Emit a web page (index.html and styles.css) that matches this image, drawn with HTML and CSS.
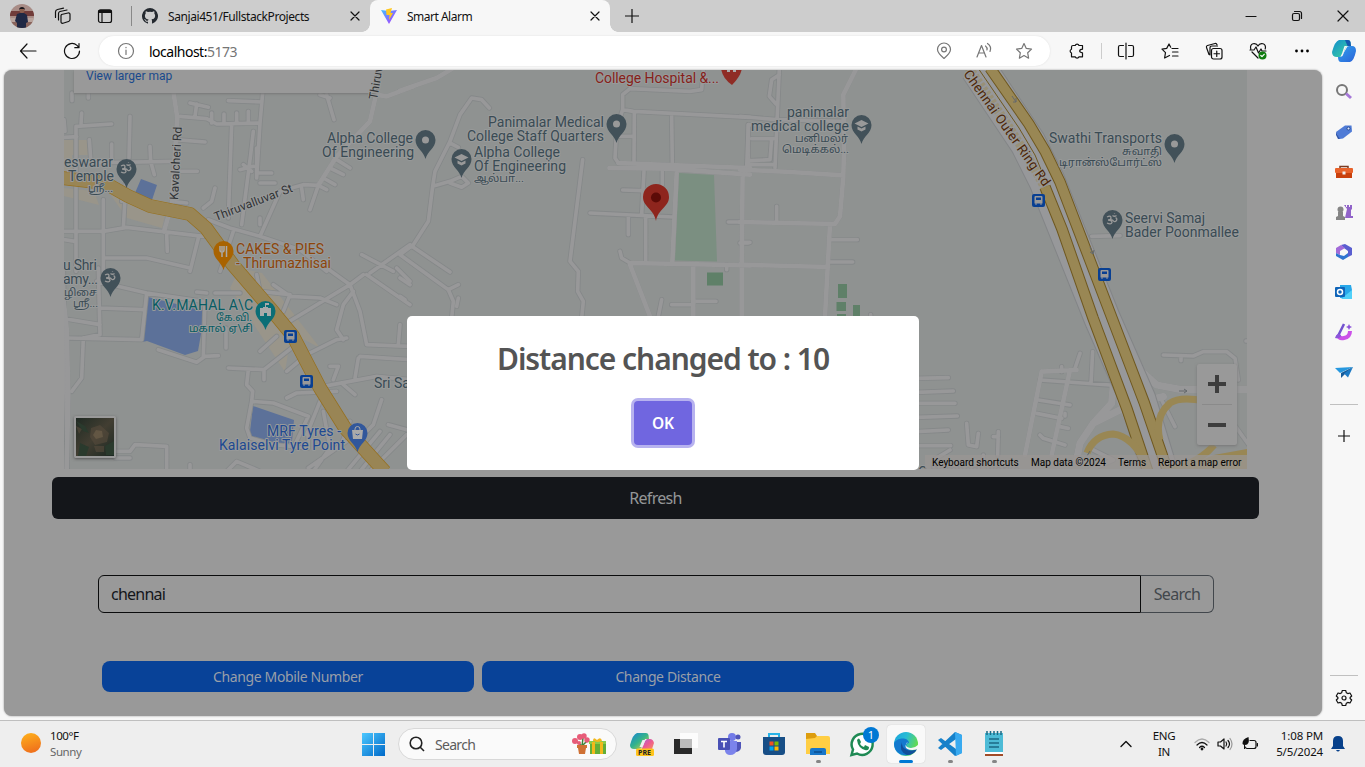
FILE: index.html
```html
<!DOCTYPE html>
<html lang="en">
<head>
<meta charset="utf-8">
<title>Smart Alarm</title>
<link rel="stylesheet" href="styles.css">
</head>
<body>
<header class="tabbar">
  <div class="slot avatar-slot"><svg width="24" height="24" viewBox="0 0 24 24"><defs><clipPath id="av"><circle cx="12" cy="12" r="12"/></clipPath></defs><g clip-path="url(#av)"><path fill="#a88c86" d="M0 0h24v24H0z"/><path fill="#713c3a" d="M0 7h24v5H0z"/><path fill="#b9a49d" d="M0 14h24v4H0z"/><path fill="#89645c" d="M0 18h24v6H0z"/><path fill="#202945" d="M7 10l3-1h4l3 2 1 7-2 1v5H7v-5l-2-2z"/><circle cx="12" cy="6.500" r="2.500" fill="#8b604f"/><path fill="#17151b" d="M9 6c0-4 6-4 6 0l-1-1h-4z"/></g></svg></div>
  <div class="slot s41"><svg class="line" width="18" height="18" viewBox="0 0 18 18"><path d="M7.500 7.500l6.500-1.500q2-.300 2 1.500v5q0 1.500-1.500 2l-5.500 1.700q-2 .500-2-1.500V8.500z"/><path d="M4.500 13V6.500Q4.500 5 6 4.500l7-1.500M1.500 10.500V5Q1.500 3 3.500 2.500l6-1.300"/></svg></div>
  <div class="slot s43"><svg class="line" width="16" height="16" viewBox="0 0 16 16"><rect x="1.500" y="1.800" width="13" height="12.700" rx="2"/><path d="M2 2.500h12v2H2z" fill="#111"/><path d="M5 5v9"/></svg></div>
  <i class="tab-sep"></i>
  <div class="tab">
    <svg width="16" height="16" viewBox="0 0 16 16"><path fill="#24292f" d="M8 0a8 8 0 0 0-2.530 15.590c.4.070.55-.170.55-.380v-1.490c-2.230.480-2.700-.950-2.700-.950-.360-.920-.890-1.170-.890-1.170-.730-.500.060-.490.060-.490.800.060 1.230.820 1.230.820.710 1.220 1.870.870 2.330.660.070-.520.280-.870.510-1.070-1.780-.200-3.640-.890-3.640-3.950 0-.870.310-1.590.820-2.150-.080-.200-.360-1.020.080-2.120 0 0 .670-.210 2.200.820a7.600 7.600 0 0 1 4 0c1.530-1.040 2.200-.820 2.200-.820.440 1.100.160 1.920.080 2.120.510.560.820 1.270.820 2.150 0 3.070-1.870 3.750-3.650 3.950.290.250.540.730.540 1.480v2.200c0 .210.150.460.550.380A8 8 0 0 0 8 0z"/></svg>
    <span class="tab-title t1">Sanjai451/FullstackProjects</span>
    <svg class="line x" width="10" height="10" viewBox="0 0 10 10"><path d="M1 1l8 8M9 1L1 9"/></svg>
  </div>
  <div class="tab active">
    <svg width="16" height="16" viewBox="0 0 16 16"><defs><linearGradient id="v1" x2="1" y2="1"><stop stop-color="#41c0ff"/><stop offset="1" stop-color="#b52fff"/></linearGradient></defs><path fill="url(#v1)" d="M0 2l8 1 8-1-8 14z"/><path fill="#ffc820" d="M5 1.500L11 0l-1.500 5H12L8 12l.500-5H5.500z"/></svg>
    <span class="tab-title t2">Smart Alarm</span>
    <svg class="line x" width="10" height="10" viewBox="0 0 10 10"><path d="M1 1l8 8M9 1L1 9"/></svg>
  </div>
  <div class="slot s43"><svg class="line" width="14" height="14" viewBox="0 0 14 14"><path d="M7 0v14M0 7h14"/></svg></div>
  <div class="window-buttons">
    <svg class="line" width="46" height="32" viewBox="0 0 46 32"><path d="M18 16.500h10"/></svg>
    <svg class="line" width="46" height="32" viewBox="0 0 46 32"><rect x="18.500" y="13.500" width="7" height="7" rx="1.500"/><path d="M20.500 11.500h5q2 0 2 2v5"/></svg>
    <svg class="line" width="46" height="32" viewBox="0 0 46 32"><path d="M18 11l10 10M28 11L18 21"/></svg>
  </div>
</header>
<nav class="toolbar">
  <div class="slot nav-back"><svg class="line" width="18" height="16" viewBox="0 0 18 16"><path d="M17 8H1.500M8 1L1.500 8 8 15"/></svg></div>
  <div class="slot nav-reload"><svg class="line" width="18" height="18" viewBox="0 0 18 18"><path d="M16.500 9a7.500 7.500 0 1 1-2.500-5.600L16 5.500M16 1.500v4.200h-4.200"/></svg></div>
  <div class="address">
    <svg class="line grey" width="18" height="18" viewBox="0 0 18 18"><circle cx="9" cy="9" r="7.500"/><path d="M9 8v4.500M9 5.300v.400"/></svg>
    <span class="url">localhost:<em>5173</em></span>
    <div class="slot s40"><svg class="line grey" width="18" height="18" viewBox="0 0 18 18"><path d="M9 16.500C5 13 2.500 10.500 2.500 7.500a6.500 6.500 0 0 1 13 0C15.500 10.500 13 13 9 16.500z"/><circle cx="9" cy="7.500" r="2.400"/></svg></div>
    <div class="slot s40"><svg class="line grey" width="18" height="18" viewBox="0 0 18 18"><path d="M2 15L6.500 3.500 11 15M3.500 11h6M10.500 4q2 1.500 1.500 4M12.500 1.500q4.500 3 2.500 8"/></svg></div>
    <div class="slot s40"><svg class="line grey" width="18" height="18" viewBox="0 0 18 18"><path d="M9 1.500l2.300 4.900 5.200.700-3.800 3.700.900 5.400L9 13.600l-4.600 2.600.900-5.400L1.500 7.100l5.200-.700z"/></svg></div>
  </div>
  <div class="slot s44"><svg class="line" width="18" height="18" viewBox="0 0 18 18"><path d="M5 3.500h2.200a2 2 0 0 1 3.800 0h3.500v3.700q-2.800.300-2.800 1.800t2.800 1.800v4H11a2 2 0 0 1-3.800 0H3.500V11a2 2 0 0 1 0-3.800V5q0-1.500 1.500-1.500z"/></svg></div>
  <i class="tool-sep"></i>
  <div class="slot s44"><svg class="line" width="18" height="18" viewBox="0 0 18 18"><path d="M9 1v16M6.500 3.500H3q-1.500 0-1.500 1.500v8q0 1.500 1.500 1.500h3.500M11.500 3.500H15q1.500 0 1.500 1.500v8q0 1.500-1.500 1.500h-3.500"/></svg></div>
  <div class="slot s44"><svg class="line" width="18" height="18" viewBox="0 0 18 18"><path d="M11 6.500h6M11.500 10H17M11.500 14H17M9.700 5.200L8 2 5.700 6.400 1 7.100l3.500 3.500-.900 5.400L8.500 13.500"/></svg></div>
  <div class="slot s44"><svg class="line" width="18" height="18" viewBox="0 0 18 18"><path d="M4 12.500l-2.500-7Q1 4 2.500 3.500L10 1.500q1.500-.300 2 1.200M5 13V6q0-2 2-2h5.500"/><rect x="6.500" y="6.500" width="10.500" height="10.500" rx="2" fill="#f7f7f7"/><path d="M11.750 9v5.500M9 11.750h5.500"/></svg></div>
  <div class="slot s44"><svg class="line" width="18" height="18" viewBox="0 0 18 18"><path d="M1.800 7C0 1 7 0 9 4c2-4 9-3 7.200 3M3 10l6 6M1 8h4l2-3 2.500 6L12 7l1 2h4"/><circle cx="13.500" cy="13.500" r="4" fill="#107c10" stroke="none"/><path d="M11.800 13.500l1.200 1.200 2.200-2.400" stroke="#fff"/></svg></div>
  <div class="slot s44"><svg width="16" height="4" viewBox="0 0 16 4"><circle cx="2.500" cy="2" r="1.400"/><circle cx="8" cy="2" r="1.400"/><circle cx="13.500" cy="2" r="1.400"/></svg></div>
  <div class="slot s40"><svg width="24" height="24" viewBox="0 0 24 24"><use href="#copilot"/></svg></div>
</nav>

<div class="middle">
  <main class="page">
    <section class="map">
      <svg class="map-art" viewBox="64 70 1183 399" width="1183" height="399">
        <defs>
          <g id="roads">
            <g transform="translate(60 68) scale(.33333)">
              <path d="M210 145L207 270M65 135L63 168M48 175L155 168M48 175V610M12 208L50 206M88 215L92 270M155 228V272M55 285L340 280M270 235L272 280 283 320M345 215L435 222M345 310L412 310M360 145L440 152 470 168 600 165M390 105L445 118M410 108L405 145M455 135V165M492 138V168M530 135V165M565 130V165M505 98L605 102M608 75L600 165 590 330M515 170L505 450M580 190L572 260 545 470M590 240V330M590 315H635M600 345H645M540 305L580 295M550 290L575 310M445 455L510 480 600 505M600 505L660 370 730 350 775 352M0 490H130L200 478 430 505M185 400L200 330M195 390L190 480M130 395V610M320 500L322 550M520 490L480 610M415 510L390 610M465 360L455 400 430 420M775 352L800 365M790 330L825 350M810 300L850 320M830 275L870 300M725 360L730 395M775 352L750 425M800 80L822 155M780 80L810 90M36 75V98M85 75V90M130 570L260 570 390 600M600 505L720 545 800 610M1050 530L930 615M905 560L1000 610M600 450V470M12 515L45 520M335 400L380 405M12 155L15 190"/>
              <path class="mid" d="M340 70L352 150 345 250 335 410 312 490M775 352L830 265 930 160 948 80 980 85 1060 55"/>
            </g>
            <g transform="translate(60 268) scale(.33333)">
              <path d="M115 0L120 200 70 210 65 330 35 370M0 150L120 170M120 120L250 125M110 40L260 75 430 100M260 75L245 215 20 210M10 0L22 600M435 100L430 265M295 245L410 283 435 265 475 263M465 75H540M410 72L440 75M498 180V240M505 300L612 305 720 220M612 305V335M565 305L560 350 578 370 575 400 560 480 570 510 640 530 745 540V490M575 400L640 405 745 445 700 540M600 250L650 205M680 165L870 50 910 20M870 50L800 0M640 50L690 85 780 90 830 110M590 20L600 70 690 80 670 130M870 50L900 130 920 230 1050 235M830 185L850 110 880 70M830 185L850 215M740 260L830 215 860 210M900 265L1050 275M895 270L885 330M790 355L950 325 1050 335M680 310L740 260M680 390L710 375 830 370M820 335L835 295 810 295M740 500L780 400M965 395L940 470 910 500M920 20L1050 110M165 550H210L225 530 320 535V610M165 570H210M745 600L860 520M860 610L960 490M900 610L990 500M930 610L1040 500M985 470L1040 485M790 430L810 540 760 610M870 460L840 540M1020 170L1015 230M1010 0L1050 40M850 350L885 380M390 590V610M500 610L530 580 600 610"/>
              <path class="mid" d="M0 0L20 180 25 380 20 610"/>
            </g>
            <g transform="translate(400 68) scale(.33333)">
              <path class="mid" d="M0 68L110 30 160 0"/>
              <path d="M268 120L245 95 215 90 180 140 150 220 105 310 98 355 85 460 40 530 0 560M98 355L150 340 185 325 205 345 185 358 150 345M150 225L175 238M40 538L150 612M0 560L145 665 160 700 155 750M145 665L175 650M0 630L30 650M0 685L15 695M175 690L170 715M548 275L510 580 535 610 533 670 550 700 545 750M910 0L905 65 870 70 690 62 668 80V125L700 130 1050 148M668 125L650 180 645 270 655 285M703 135L702 285M815 145L817 290M660 205H700M732 310L725 440M787 310V350M668 366L725 368M570 435L820 447M685 447V500M737 447V580M660 550L665 570 690 585M815 710H880M880 700H948M785 695L775 745M985 462H1025M980 590V605M1025 523H1050M1045 170V290"/>
              <path class="mid" d="M655 285L1050 300M628 300L800 302 1050 320M830 315L817 580M690 585L1050 592M690 590L750 745M880 595V750M1028 310L1025 590V750"/>
            </g>
            <g transform="translate(740 68) scale(.33333)">
              <path d="M118 0L105 300M118 20L95 35 88 85 108 108M0 145L110 155 310 160M25 170L20 300M35 212H100M30 278L90 275 95 212M20 290H100M110 415V460M270 515H352M270 582H338M0 525H25M392 740V750M25 170H100"/>
              <path class="mid" d="M350 0L310 80 312 250 310 320M0 305L150 312 310 322M310 325L300 445 285 468 0 462M270 470L255 745M0 590L265 597"/>
              <path d="M1055 505L1140 503"/>
            </g>
            <g transform="translate(880 300) scale(.33333)">
              <path d="M110 235L205 233M110 277L220 273M110 310H225M110 352L232 348M110 395L205 390M110 437L212 437M480 240L690 255M475 300L570 315M470 340L545 355M600 160L585 205M638 155L633 250M545 200V215M480 405L490 415 555 435M540 380L565 385M555 340V348M260 370L265 435 290 440 295 400M355 395L353 465M340 410H355M310 465V480M850 165L940 168 970 155 1040 155 1065 175 1075 240M903 170V182M845 300L885 380M1060 370L1110 440M1110 123h-12M160 500V480L210 450"/>
              <path class="mid" d="M485 215L435 465M485 215L590 210M570 210L515 465"/>
              <path class="wide" d="M700 255L695 310 640 370 600 430 590 480M640 370L760 310 850 290M780 210L830 255 900 268 1110 268M735 200L720 300 760 400 810 510"/>
              <path d="M630 510L700 480 640 450"/>
            </g>
          </g>
          <g id="pin"><path d="M0 16C-2 8-10 5-10-3a10 10 0 0 1 20 0C10 5 2 8 0 16z"/></g>
          <g id="dot"><use href="#pin"/><circle cy="-3" r="3.500" fill="#999"/></g>
          <g id="cap"><use href="#pin"/><path fill="#999" d="M0-8l7 3.500L0-1l-7-3.500zM-4-1.500L0 .500l4-2V1.500L0 3.500l-4-2z"/></g>
          <g id="om"><use href="#pin"/><path fill="none" stroke="#999" stroke-width="1.300" d="M-5.500-6q4-2 4 1 0 2-3 2 4 0 4 2.500-1 2.500-5 .500M-2-3q2-.500 3 1t3-.500q1-2.500-1-2.500M0-7.500q2 1.500 4 0M2-9.500v.500"/></g>
          <g id="bus"><rect x="-6.500" y="-6.500" width="13" height="13" rx="2" fill="#083f92"/><path fill="#999" d="M-4-3.500Q-4-4.500-3-4.500H3Q4-4.500 4-3.500V3H3v1.500H2V3H-2V4.500H-3V3H-4zM-2.500-3V-.500H2.500V-3z"/></g>
          <linearGradient id="sat" x2="1" y2="1"><stop stop-color="#1f2a23"/><stop offset=".5" stop-color="#423e32"/><stop offset="1" stop-color="#1c2822"/></linearGradient>
        </defs>
        <path fill="#8f9291" d="M64 70h1183v399H64z"/>
        <g class="sand"><path d="M64 140H88V155H72V178H64zM64 196L99 205 94 191 64 188zM107 190L168 202 162 228 127 218zM240 268L262 273 320 348 305 340 291 335 285 372 230 288z"/></g>
        <g fill="#5c7199"><path d="M141 179L157 185 152 200 135 193zM148 297L205 311 198 351 185 355 147 341 142 342zM253 406L294 420 292 441 283 448 249 440z"/></g>
        <path fill="#7b8f81" d="M679 173L714 175 717 261.500 675 260.500z"/>
        <path fill="#5f8068" d="M707 272.500h16v13h-16zM838 284h9v14h-9zM836.500 302h9.500v9h-9.500zM853 305h7v12h-7zM837 314h9v4h-9z"/>
        <use href="#roads" class="casing"/>
        <use href="#roads" class="surface"/>
        <path class="hw-case" d="M978 68L1028 143 1047 181 1102 318 1138 400 1160 472"/>
        <path class="hw" d="M978 68L1028 143 1047 181 1102 318 1138 400 1160 472"/>
        <g class="gold-case"><path d="M1045 187L1062 229 1093 318 1127 409 1148 472M990 68L1029 124 1045 151 1060 182 1107 305 1144 402 1168 472"/></g>
        <g class="gold"><path d="M1045 187L1062 229 1093 318 1127 409 1148 472M990 68L1029 124 1045 151 1060 182 1107 305 1144 402 1168 472"/></g>
        <path class="gold-edge" d="M978 68L1019 128 1035 155 1047 184"/>
        <path class="gold-left" d="M969 68L1009 127 1032 164 1045 188"/>
        <g class="ramp"><path d="M1087 453Q1094 435 1113 434 1133 436 1146 465M1160 440Q1154 417 1170 403 1180 396 1205 401M1214 445Q1200 462 1172 469"/><path fill="#998754" stroke="none" d="M1214 455L1247 449V469H1180z"/></g>
        <path class="main-case" d="M62 178L105 183 128 196 150 206 190 214 206 228 233 265 270 308 293 336 320 388 345 428 385 472"/>
        <path class="main-road" d="M62 178L105 183 128 196 150 206 190 214 206 228 233 265 270 308 293 336 320 388 345 428 385 472"/>
        <g stroke="#64696c" fill="none"><path d="M1012 96l4 6m-3 0h3v-4M1090 247l3 7m-3-2l3 2 1-4M1179 391h8m-3-2l3 2-3 2M1087 456l3-5"/></g>

        <use href="#bus" x="1038.500" y="200.500"/><use href="#bus" x="1104.500" y="274.500"/><use href="#bus" x="290.500" y="336.500"/><use href="#bus" x="306.500" y="381.500"/>
        <g fill="#425159"><use href="#dot" x="425.500" y="143"/><use href="#dot" x="616.500" y="127"/><use href="#dot" x="1174.500" y="147"/><use href="#cap" x="461.500" y="162"/><use href="#cap" x="861.500" y="128"/><use href="#om" x="126.500" y="172"/><use href="#om" x="110.500" y="281"/><use href="#om" x="1112.500" y="223"/></g>
        <use href="#pin" x="223.500" y="254" fill="#a96300"/><path stroke="#aaa" stroke-width="1.500" fill="none" d="M220 246v4q0 2 2 2v5M224 246v4q0 2-2 2M222 246v5M226.500 257v-11"/>
        <use href="#pin" x="265.500" y="314" fill="#0b6e76"/><path fill="#aaa" d="M260 316v-8h3v-1h2v-4h4v2h-3v2h2v1h3v8h-4v-3h-3v3z"/>
        <use href="#pin" x="357.500" y="436" fill="#31579b"/><path fill="#aaa" d="M352 430h11l-1 9h-9z"/><path stroke="#aaa" fill="none" d="M355 430v-1a2.500 2.500 0 0 1 5 0v1"/><path stroke="#31579b" fill="none" d="M355.500 434q2 2 4 0"/>
        <path fill="#8f2c25" d="M721 68h21q-1 8-10 17Q722 78 721 68z"/><path fill="#aaa" d="M727 68h3v4h-3zM733 68h3v4h-3z"/>
        <path fill="#8e251d" d="M656 221C654 209 643 207 643 197a13 13 0 0 1 26 0C669 207 658 209 656 221z"/><circle cx="656" cy="197.500" r="5" fill="#5c0b07"/>

        <g class="label">
          <text x="327" y="143" textLength="86">Alpha College</text><text x="322" y="157" textLength="92">Of Engineering</text>
          <text x="488" y="127" textLength="116">Panimalar Medical</text><text x="467" y="141" textLength="137">College Staff Quarters</text>
          <text x="474" y="157" textLength="86">Alpha College</text><text x="474" y="171" textLength="92">Of Engineering</text><text class="ta" x="474" y="182" textLength="50" lengthAdjust="spacingAndGlyphs">ஆல்பா...</text>
          <text x="787" y="117" textLength="62">panimalar</text><text x="751" y="131" textLength="98">medical college</text><text class="ta" x="795" y="142" textLength="53" lengthAdjust="spacingAndGlyphs">பனிமலர்</text><text class="ta" x="782" y="153" textLength="67" lengthAdjust="spacingAndGlyphs">மெடிக்கல்...</text>
          <text x="1049" y="143" textLength="113">Swathi Transports</text><text class="ta" x="1122" y="155" textLength="40" lengthAdjust="spacingAndGlyphs">சுவாதி</text><text class="ta" x="1059" y="166" textLength="103" lengthAdjust="spacingAndGlyphs">டிரான்ஸ்போர்ட்ஸ்</text>
          <text x="1125" y="223" textLength="80">Seervi Samaj</text><text x="1125" y="237" textLength="114">Bader Poonmallee</text>
          <text x="64" y="167" textLength="49">eswarar</text><text x="68" y="181" textLength="46">Temple</text><text class="ta" x="88" y="192" textLength="25" lengthAdjust="spacingAndGlyphs">ஸ்ரீ...</text>
          <text x="63" y="270" textLength="34">u Shri</text><text x="63" y="284" textLength="35">amy...</text><text class="ta" x="64" y="296" textLength="33" lengthAdjust="spacingAndGlyphs">ழிசை</text><text class="ta" x="73" y="307" textLength="25" lengthAdjust="spacingAndGlyphs">ஸ்ரீ...</text>
          <text x="374" y="388">Sri Sair</text><text x="918" y="477">C</text>
        </g>
        <g class="label orange"><text x="236" y="254" textLength="88">CAKES &amp; PIES</text><text x="236" y="268" textLength="95">- Thirumazhisai</text></g>
        <g class="label teal"><text x="152" y="310" textLength="101">K.V.MAHAL A\C</text><text class="ta" x="216" y="321" textLength="36" lengthAdjust="spacingAndGlyphs">கே.வி.</text><text class="ta" x="189" y="332" textLength="64" lengthAdjust="spacingAndGlyphs">மகால் ஏ\சி</text></g>
        <g class="label blue"><text x="267" y="436" textLength="74">MRF Tyres -</text><text x="219" y="450" textLength="126">Kalaiselvi Tyre Point</text></g>
        <g class="label red"><text x="595" y="83" textLength="124">College Hospital &amp;...</text></g>
        <g class="label street"><text transform="translate(178 200) rotate(-87)" textLength="73">Kavalcheri Rd</text><text transform="translate(216 221) rotate(-21)" textLength="83">Thiruvalluvar St</text></g>
        <g class="label street brown"><text transform="translate(963 74) rotate(54.500)" textLength="139">Chennai Outer Ring Rd</text></g>
        <text x="930" y="474" class="ghost" textLength="90">Dambedi works</text>
      </svg>
      <div class="view-larger">View larger map</div>
      <svg class="street-top" width="30" height="34" viewBox="368 70 30 34"><g class="label street"><text transform="translate(377 100) rotate(-80)">Thiruvalluvar St</text></g></svg>
      <div class="satellite"><svg width="38" height="38" viewBox="0 0 38 38"><path fill="url(#sat)" d="M0 0h38v38H0z"/><g fill="#574b3c" opacity=".6"><path d="M15 10l9-3 9 8-2 9-12 3-5-8zM18 28h10v6H20zM0 8l6 3-3 5z"/><path fill="#7a6850" d="M20 12l6 1 1 6-7 2-3-4z"/></g><g fill="#2a3a2d"><path d="M0 3l9 5 4 7-6-2zM4 25l9 4-3 9H2zM29 28l9-5v14h-8z"/></g></svg></div>
      <div class="zoom-control"><svg width="40" height="81" viewBox="0 0 40 81"><path fill="#3d3d3d" d="M11 18h7v-7h4v7h7v4h-7v7h-4v-7h-7zM11 59h18v4H11z"/><path fill="#8a8a8a" d="M5 40h30v1H5z"/></svg></div>
      <div class="map-credit"><span class="c1">Keyboard shortcuts</span><span class="c2">Map data ©2024</span><span class="c3">Terms</span><span class="c4">Report a map error</span></div>
    </section>
    <button class="refresh">Refresh</button>
    <div class="search-row"><div class="search-input">chennai</div><div class="search-button">Search</div></div>
    <div class="actions"><button>Change Mobile Number</button><button>Change Distance</button></div>
    <div class="overlay"><div class="modal"><h2>Distance changed to : 10</h2><button>OK</button></div></div>
  </main>
  <aside class="sidebar">
    <div class="side-slot"><svg width="18" height="18" viewBox="0 0 18 18" fill="none"><circle cx="7" cy="7" r="5" stroke="#777" stroke-width="2"/><path d="M11 10.500l5 4.500" stroke="#a678d8" stroke-width="3"/></svg></div>
    <div class="side-slot"><svg width="18" height="16" viewBox="0 0 18 16"><path fill="#4f7bd6" d="M1 8L10 1.500h6.500l.500 6-9 7-3.500.500z"/><path fill="#2f57ad" d="M1 8l4 7h-2L1 11z"/><circle cx="13.500" cy="4.500" r="1.500" fill="#dce6ff" stroke="#274b94"/></svg></div>
    <div class="side-slot"><svg width="18" height="16" viewBox="0 0 18 16"><path d="M5 5V2.500h8V5" fill="none" stroke="#7b3a20" stroke-width="1.500"/><rect y="4" width="18" height="5" rx="1" fill="#e8622a"/><path fill="#c9400c" d="M1 9h16v5H1z"/><path fill="#eee" d="M7.500 7.500h3v3h-3z"/></svg></div>
    <div class="side-slot"><svg width="18" height="18" viewBox="0 0 18 18"><path fill="#9163c9" d="M9 2h2v2h1V2h2v2h1V2h2v4l-1 1v6h2v2h-8l2-9z"/><g fill="#858585"><circle cx="5.500" cy="6.500" r="3"/><path d="M3 9h5v4l2 1v3H1v-3l2-1z"/></g></svg></div>
    <div class="side-slot"><svg width="18" height="18" viewBox="0 0 18 18"><path fill="#5a5ed0" d="M6 2l4-1 7 4v7l-4 2V8L9 5z"/><path fill="#a26bd8" d="M6 2l4 3-5 3v4L1 10V5z"/><path fill="#2e74d0" d="M1 10l4 2 4 1 4-3v4l-5 3-7-4z"/></svg></div>
    <div class="side-slot"><svg width="18" height="16" viewBox="0 0 18 16"><path fill="#28a8ea" d="M5 1h11l1 5v8H5z"/><path fill="#50d0f8" d="M17 6v9H6z"/><rect y="3" width="10" height="10" rx="1" fill="#0f64b8"/><circle cx="5" cy="8" r="2.500" fill="none" stroke="#fff" stroke-width="1.500"/></svg></div>
    <div class="side-slot"><svg width="20" height="18" viewBox="0 0 20 18"><path d="M4 12q1 4 6 3 6-1 6-7" fill="none" stroke="#cb50e8" stroke-width="4"/><path d="M4 13L10 1" stroke="#7353cf" stroke-width="2.500"/><path fill="#8d55db" d="M14 3l1-2 1 2 2 1-2 1-1 2-1-2-2-1zM1 15q2-6 6-3 0 4-6 3z"/></svg></div>
    <div class="side-slot"><svg width="18" height="16" viewBox="0 0 18 16"><path fill="#2698df" d="M0 4l18-1L5 9z"/><path fill="#165b99" d="M18 3L6 9v5l4-4z"/><path fill="#1b79c4" d="M18 3L9 9.500l4 4z"/></svg></div>
    <i class="side-line"></i>
    <div class="side-slot"><svg class="line" width="12" height="12" viewBox="0 0 12 12"><path d="M6 0v12M0 6h12"/></svg></div>
    <i class="side-line last"></i>
    <div class="side-slot"><svg class="line" width="18" height="18" viewBox="0 0 18 18"><circle cx="9" cy="9" r="2"/><path d="M7.300 1.500h3.400l.6 2.200 1.500.9 2.200-.6 1.700 3-1.600 1.500v1l1.600 1.500-1.700 3-2.200-.6-1.500.9-.6 2.200H7.300l-.6-2.200-1.500-.9-2.200.6-1.700-3 1.600-1.500v-1L1.300 7 3 4l2.200.6 1.500-.9z"/></svg></div>
  </aside>
</div>

<footer class="taskbar">
  <svg class="sun" width="20" height="20" viewBox="0 0 20 20"><defs><linearGradient id="sung" x2=".3" y2="1"><stop stop-color="#ffb31c"/><stop offset="1" stop-color="#f0731c"/></linearGradient></defs><circle cx="10" cy="10" r="10" fill="url(#sung)"/></svg>
  <div class="weather"><span>100°F</span><span class="muted">Sunny</span></div>
  <svg class="win" width="23" height="23" viewBox="0 0 23 23"><defs><linearGradient id="wing" x2="1" y2="1"><stop stop-color="#4cc8ff"/><stop offset="1" stop-color="#0069c8"/></linearGradient></defs><path fill="url(#wing)" d="M0 0h11v11H0zM12 0h11v11H12zM0 12h11v11H0zM12 12h11v11H12z"/></svg>
  <div class="task-search"><svg width="16" height="16" viewBox="0 0 16 16" fill="none" stroke="#222" stroke-width="1.600"><circle cx="7" cy="7" r="5.800"/><path d="M11 11l4 4"/></svg><span>Search</span>
    <svg width="34" height="22" viewBox="0 0 34 22"><path stroke="#39823a" stroke-width="1.500" fill="none" d="M5 9l5 4 1-8M10 13l5-5"/><g fill="#e75c78"><circle cx="3" cy="8" r="3"/><circle cx="8" cy="4" r="3"/><circle cx="12" cy="3" r="2.700"/><circle cx="15" cy="7" r="2.700"/><circle cx="7" cy="10" r="2"/></g><path fill="#cf7135" d="M5 12h10v3h-1l-1 6H7l-1-6H5z"/><path fill="#62ae38" d="M18 9h16v12H18z"/><path fill="#8acb4b" d="M17 8h17v3H17z"/><path fill="#f2b81c" d="M20 9h3v12h-3zM28 9h3v12h-3zM21 8q0-5 4-1 4-4 5 1l-4 1z"/></svg></div>
  <div class="app"><svg width="24" height="24" viewBox="0 0 24 24"><defs><linearGradient id="cg1" y2="1"><stop stop-color="#108ccf"/><stop offset="1" stop-color="#42d79b"/></linearGradient><linearGradient id="cg2" x2="1" y2="1"><stop stop-color="#31a2ee"/><stop offset="1" stop-color="#2b62d8"/></linearGradient><linearGradient id="cg3" x2="1" y2="1"><stop stop-color="#9862ef"/><stop offset=".5" stop-color="#ec5a91"/><stop offset="1" stop-color="#ff9c52"/></linearGradient><linearGradient id="cg4" y2="1"><stop stop-color="#1782d8"/><stop offset=".5" stop-color="#35b48a"/><stop offset="1" stop-color="#f5d03c"/></linearGradient><g id="copilot"><path fill="url(#cg1)" d="M7 1h9q2 0 2.500 2L19 7h-3q-2 0-3 3l-2 5q-1 3-4 3H5q-5 0-5-5Q3 2 7 1z"/><path fill="url(#cg2)" d="M17 7h3q4 0 4 5-2 10-6 11H9q-3 0-3-5h2q2 0 3-3l3-5q1-3 3-3z"/><path fill="#f7f7f7" d="M12.500 7h3q-2 1-3 4l-1.500 5q-.500 1.500-2.500 1.500l1.500-3z"/><path fill="#1557b0" d="M13 1h3q2 0 2.500 2L19 7h-3.500z"/></g></defs><path fill="url(#cg4)" d="M7 1h9q2 0 2.500 2L19 7h-4l-3 8q-1 2-4 2H4q-4 0-4-4Q3 2 7 1z"/><path fill="url(#cg3)" d="M17 7h3q3 0 4 4l-3 9H9q3-2 4-6l2-5z"/><path fill="#eee" d="M12.500 8h3l-3 7h-3z"/><rect x="6" y="16.500" width="18" height="7.500" rx="1.500" fill="#ffc41b"/><text class="pre" x="8" y="22.700">PRE</text></svg></div>
  <div class="app"><svg width="24" height="24" viewBox="0 0 24 24"><path fill="#292929" d="M0 7h18v15H0z"/><path fill="#fff" opacity=".8" d="M6 1h18v15H6z"/><path fill="#bbb" d="M6 7h12v9H6z"/></svg></div>
  <div class="app"><svg width="24" height="24" viewBox="0 0 24 24"><circle cx="14" cy="5" r="4" fill="#737be8"/><circle cx="20" cy="5" r="2.500" fill="#4f54b9"/><path fill="#4f54b9" d="M16 10h7v6q-1 4-6 4z"/><path fill="#7b83eb" d="M7 9h12v8q-1 6-7 6-4 0-5-4z"/><rect x="0" y="6" width="12" height="12" rx="1" fill="#4950b5"/><path stroke="#fff" stroke-width="1.600" d="M3 9.500h6M6 9.500V15.500"/></svg></div>
  <div class="app"><svg width="24" height="24" viewBox="0 0 24 24"><path d="M7 6V2h10v4" fill="none" stroke="#27b3e8" stroke-width="2"/><path fill="#174e86" d="M1 5h22v15q0 3-3 3H4q-3 0-3-3z"/><path fill="#f25022" d="M7.500 9.500h4v4h-4z"/><path fill="#7fba00" d="M12.500 9.500h4v4h-4z"/><path fill="#00a4ef" d="M7.500 14.500h4v4h-4z"/><path fill="#ffb900" d="M12.500 14.500h4v4h-4z"/></svg></div>
  <div class="app running"><svg width="24" height="24" viewBox="0 0 24 24"><path fill="#dd9d0e" d="M0 1h9l2 3h10v5H0z"/><path fill="#ffce44" d="M0 7l9-1 2-2h11q2 0 2 2v16H0z"/><path fill="#1876c8" d="M4 23v-5q0-2 2-2h12q2 0 2 2v5z"/><path fill="#0d579d" d="M8 19h8v2H8z"/></svg></div>
  <div class="app"><svg width="28" height="28" viewBox="0 0 28 28"><path d="M3.500 25l1.500-5.500a10.500 10.500 0 1 1 4 4z" fill="#fff" stroke="#1f8a54" stroke-width="2.500"/><path fill="#1f8a54" d="M9 10q2-3 3 0l1 2-1 2q2 3 4 3l1-2 4 2q0 4-4 3Q10 18 9 10z"/></svg><b class="badge">1</b></div>
  <div class="app current"><svg width="24" height="24" viewBox="0 0 24 24"><defs><linearGradient id="eg" x2="1" y2=".4"><stop stop-color="#1ba4dd"/><stop offset=".5" stop-color="#27bbd5"/><stop offset="1" stop-color="#62db50"/></linearGradient></defs><circle cx="12" cy="12" r="12" fill="url(#eg)"/><path fill="#1379ce" d="M0 12C1 6 14 4 15 11c-3 0-4 4-1 6 3 2 6 2 9 0C18 26 1 26 0 12z"/><path fill="#124f9a" d="M8 10q-4 9 5 13 7 0 10-6-5 3-10 1-6-3-5-8z"/><path fill="#f7f7f7" d="M14 10c-4 2-2 6 3 6q4 0 7-3v4l-1.500.500c-10 2-14-3-8.500-7.500z"/></svg></div>
  <div class="app running"><svg width="24" height="24" viewBox="0 0 24 24"><path fill="#1681ca" d="M17 0l7 3v18l-7 3L0 8l3-2 15 11V7L3 18l-3-2z"/><path fill="#38aaf0" d="M17 0l7 3v18l-6 3z"/></svg></div>
  <div class="app running"><svg width="20" height="26" viewBox="0 0 20 26"><path fill="#4dbbd6" d="M1 2h18v20H1z"/><path fill="#fff" d="M1 21h18v2H1z"/><path fill="#a14b27" d="M1 23h18v2H1z"/><path stroke="#1b6a85" stroke-width="1.500" d="M3 0v4M6.500 0v4M10 0v4M13.500 0v4M17 0v4M5 8h10M5 12h10M5 16h10"/></svg></div>
  <div class="tray">
    <svg class="line" width="12" height="8" viewBox="0 0 12 8"><path d="M1 6.500l5-5 5 5" stroke-width="1.400"/></svg>
    <div class="lang"><span>ENG</span><span>IN</span></div>
    <svg class="line" width="16" height="14" viewBox="0 0 16 14"><path d="M1 5.500q7-7 14 0" stroke="#aaa"/><path d="M3 8q5-5 10 0M5.500 10.500q2.500-2.500 5 0"/><circle cx="8" cy="12" r=".8" fill="#111"/></svg>
    <svg class="line vol" width="16" height="14" viewBox="0 0 16 14"><path d="M1 5h2.500L7 2v10L3.500 9H1zM9 5q1.500 2 0 4M11 3.500q3 3.500 0 7"/><path d="M13 1.500q4 5.500 0 11" stroke="#999"/></svg>
    <svg class="line bat" width="16" height="14" viewBox="0 0 16 14"><path d="M8 3.500h4q2 0 2 2v4q0 2-2 2H5q-1.500 0-1.500-1.500M15.500 6.500v2.500"/><path fill="#111" stroke="none" d="M6.500 0Q0 2 .500 7l1.500 1v4h1V8q5 0 3.500-8z"/></svg>
    <div class="clock"><span>1:08 PM</span><span>5/5/2024</span></div>
    <svg width="14" height="16" viewBox="0 0 14 16"><path fill="#07408a" d="M7 0q5 0 5 5v5l2 3H0l2-3V5q0-5 5-5zM5 14h4q-2 3-4 0z"/></svg>
  </div>
</footer>
</body>
</html>
```
FILE: styles.css
```css
* { box-sizing: border-box; }
body { margin: 0; width: 1365px; height: 767px; overflow: hidden; display: flex; flex-direction: column; background: #f7f7f7; font-family: "Noto Sans", "Open Sans", sans-serif; color: #111; }
svg { display: block; flex: none; }
button { border: 0; font: inherit; padding: 0; }
.line { fill: none; stroke: #111; stroke-width: 1.2; stroke-linecap: round; stroke-linejoin: round; }
.line.grey { stroke: #767676; }
.slot { display: flex; align-items: center; justify-content: center; flex: none; }
.s40 { width: 40px; } .s41 { width: 41px; } .s43 { width: 43px; } .s44 { width: 44px; }

.tabbar { height: 32px; display: flex; background: #cdcdcd; flex: none; }
.avatar-slot { width: 42px; padding-left: 2px; }
.tab-sep { width: 1px; height: 20px; margin: 6px 0 0 5px; background: #888; }
.tab { width: 238px; display: flex; align-items: center; padding: 0 10px; font-size: 12px; }
.tab-title { margin-left: 10px; white-space: nowrap; }
.t1 { letter-spacing: -.42px; }
.t2 { letter-spacing: -.5px; }
.tab .x { margin-left: auto; }
.tab.active { width: 240px; background: #f7f7f7; border-radius: 8px 8px 0 0; position: relative; padding-left: 11px; }
.tab.active::before, .tab.active::after { content: ""; position: absolute; bottom: 0; width: 8px; height: 8px; }
.tab.active::before { left: -8px; background: radial-gradient(circle at 0 0, transparent 7.5px, #f7f7f7 8px); }
.tab.active::after { right: -8px; background: radial-gradient(circle at 100% 0, transparent 7.5px, #f7f7f7 8px); }
.window-buttons { display: flex; margin-left: auto; width: 137px; }
.window-buttons svg { width: 46px; }

.toolbar { height: 38px; flex: none; display: flex; align-items: center; }
.nav-back { width: 56px; }
.nav-reload { width: 32px; }
.address { margin: 0 5px 0 11px; width: 951px; height: 30px; background: #fff; border-radius: 15px; display: flex; align-items: center; padding: 0 6px 0 18px; box-shadow: 0 0 2px #ddd; }
.url { margin: 0 auto 0 14px; font-size: 14px; letter-spacing: -.5px; color: #000; }
.url em { font-style: normal; color: #757575; }
.tool-sep { width: 1px; height: 16px; background: #ccc; margin: 0 2px; }

.middle { height: 650px; flex: none; display: flex; }
.page { margin-left: 4px; width: 1318px; height: 646px; border-radius: 8px; overflow: hidden; background: #999; position: relative; display: flex; flex-direction: column; box-shadow: 0 0 2px #888; }
.map { margin-left: 60px; width: 1183px; height: 399px; position: relative; overflow: hidden; flex: none; }
.casing { fill: none; stroke: #858889; stroke-width: 16; stroke-linecap: round; stroke-linejoin: round; }
.surface { fill: none; stroke: #989899; stroke-width: 11; stroke-linecap: round; stroke-linejoin: round; }
.mid { stroke-width: 14; }
.wide { stroke-width: 22; }
.sand { fill: #99958a; }
.hw-case { fill: none; stroke: #838587; stroke-width: 37; }
.hw { fill: none; stroke: #97989a; stroke-width: 35; }
.gold-case { fill: none; stroke: #6f5820; stroke-width: 11.500; }
.gold { fill: none; stroke: #998754; stroke-width: 9.500; }
.gold-edge { fill: none; stroke: #6f5820; stroke-width: 1; }
.gold-left { fill: none; stroke: #998754; stroke-width: 9; stroke-dasharray: 3 2; opacity: .5; }
.ramp { fill: none; stroke: #998754; stroke-width: 7; }
.main-case { fill: none; stroke: #96701f; stroke-width: 14; stroke-linejoin: round; }
.main-road { fill: none; stroke: #998555; stroke-width: 12.500; stroke-linejoin: round; }
.label { font: 14px Roboto, "Noto Sans Tamil", sans-serif; fill: #3a4b54; stroke: #989a9a; stroke-width: 2px; paint-order: stroke; stroke-linejoin: round; }
.label .ta { font-size: 10.500px; }
.label.orange { fill: #8d4509; } .label.teal { fill: #075c63; } .label.blue { fill: #204991; } .label.red { fill: #861f1a; }
.label.street { font-size: 12px; fill: #303235; }
.label.brown { fill: #4d2606; font-size: 13.500px; }
.street-top { position: absolute; left: 304px; top: 0; }
.ghost { font: 13px Roboto, sans-serif; fill: #747b83; }
.view-larger { position: absolute; left: 10px; top: 0; width: 302px; height: 23px; background: #999; padding-left: 12px; font: 12px/12px Roboto, sans-serif; color: #1a4a8d; box-shadow: 0 1px 2px #777; letter-spacing: 0; }
.satellite { position: absolute; left: 10px; top: 346px; border: 2px solid #999; border-radius: 2px; box-shadow: 0 1px 3px #555; }
.zoom-control { position: absolute; left: 1133px; top: 294px; background: #999; border-radius: 2px; box-shadow: 0 1px 3px #777; }
.map-credit { position: absolute; right: 0; bottom: 0; height: 14px; width: 322px; padding-left: 7px; display: flex; align-items: center; background: rgba(153, 150, 148, .75); font: 10px Roboto, sans-serif; color: #000; white-space: nowrap; }
.c1 { width: 99px; } .c2 { width: 87px; } .c3 { width: 40px; }
.refresh { margin: 8px 0 0 48px; width: 1207px; height: 42px; border-radius: 6px; background: #14161a; color: #949698; font-size: 16px; letter-spacing: -.7px; flex: none; }
.search-row { display: flex; margin: 56px 0 0 94px; width: 1116px; height: 38px; font-size: 16px; line-height: 36px; }
.search-input { width: 1043px; border: 1px solid #0a0b0c; border-radius: 6px 0 0 6px; padding-left: 12px; color: #14161a; letter-spacing: -.75px; }
.search-button { flex: 1; border: 1px solid #42474c; border-left: 0; border-radius: 0 6px 6px 0; text-align: center; color: #42474c; letter-spacing: -.7px; }
.actions { display: flex; gap: 8px; margin: 48px 0 0 98px; }
.actions button { width: 372px; height: 31px; border-radius: 8px; background: #084298; color: #999fa8; font-size: 14px; letter-spacing: -.38px; }
.overlay { position: absolute; inset: 0; display: flex; align-items: center; justify-content: center; }
.modal { width: 512px; height: 154px; border-radius: 5px; background: #fff; display: flex; flex-direction: column; align-items: center; }
.modal h2 { margin: 24px 0 0; font-size: 30px; line-height: 38px; font-weight: 600; color: #545454; letter-spacing: -1.05px; white-space: nowrap; }
.modal button { margin-top: 23px; width: 58px; height: 44px; border-radius: 4px; background: #7066e0; color: #fff; font-size: 15.500px; font-weight: 600; box-shadow: 0 0 0 3px #b7b2ef; }

.sidebar { width: 43px; padding: 2px 0; display: flex; flex-direction: column; align-items: center; }
.side-slot { height: 40px; width: 43px; display: flex; align-items: center; justify-content: center; flex: none; }
.side-line { width: 28px; height: 1px; flex: none; background: #c0c0c0; margin: 12px 0 11px; }
.side-line.last { margin: auto 0 2px; }

.taskbar { height: 47px; flex: none; display: flex; align-items: center; background: #eee; border-top: 1px solid #bfbfbf; font-size: 11.500px; }
.sun { margin: 0 9px 3px 21px; }
.weather { width: 312px; display: flex; flex-direction: column; line-height: 16px; letter-spacing: -.4px; }
.muted { color: #666; }
.task-search { margin: 0 3px 0 13px; width: 219px; height: 32px; border: 1px solid #d8d8d8; border-radius: 16px; background: #fafafa; display: flex; align-items: center; padding: 0 10px; font-size: 14px; color: #5c5c5c; letter-spacing: -.7px; }
.task-search span { margin: 0 auto 0 10px; }
.app { width: 44px; height: 46px; display: flex; align-items: center; justify-content: center; position: relative; flex: none; }
.pre { font: 700 7px "Open Sans", sans-serif; fill: #222; }
.running::after, .current::after { content: ""; position: absolute; bottom: 4px; width: 5px; height: 3px; border-radius: 2px; background: #858585; }
.current::after { width: 14px; background: #0078d4; }
.current { width: 38px; height: 38px; margin: 0 3px; background: #f9f9f9; border-radius: 4px; box-shadow: 0 0 1px #bbb; }
.current::after { bottom: 0; }
.badge { position: absolute; left: 23px; top: 6px; width: 16px; height: 16px; border-radius: 50%; background: #0078d4; color: #fff; font-size: 11px; line-height: 16px; font-weight: 400; text-align: center; }
.tray { flex: 1; display: flex; align-items: center; padding-left: 104px; }
.lang { width: 32px; margin: 0 14px 0 16px; text-align: center; display: flex; flex-direction: column; line-height: 16px; letter-spacing: -.3px; }
.vol { margin-left: 7px; } .bat { margin-left: 9px; }
.clock { width: 65px; margin-right: 8px; display: flex; flex-direction: column; text-align: right; line-height: 16px; letter-spacing: -.15px; }
```
